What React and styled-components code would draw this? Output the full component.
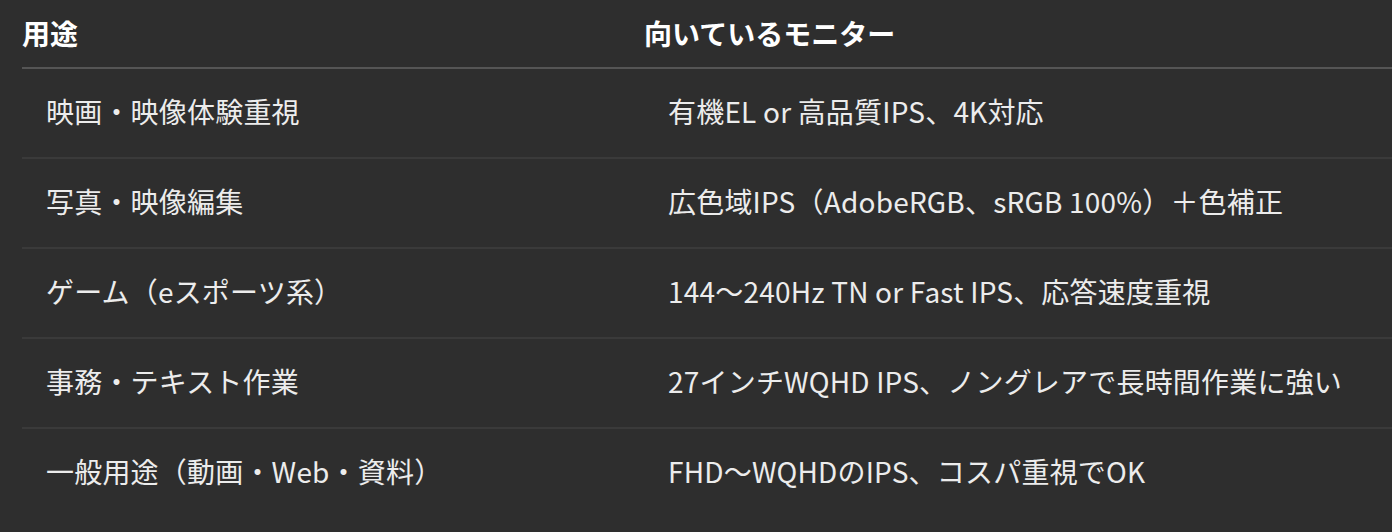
import React from "react";
import styled, { createGlobalStyle } from "styled-components";

const Global = createGlobalStyle`
  html, body {
    margin: 0;
    padding: 0;
    background: #2e2e2e;
  }
  body {
    font-family: "Noto Sans CJK JP", "Noto Sans", sans-serif;
    color: #eeeeee;
    overflow: hidden;
  }
`;

const Page = styled.div`
  width: 1392px;
  height: 532px;
  background: #2e2e2e;
  padding-left: 22px;
  box-sizing: border-box;
`;

const Table = styled.div`
  display: grid;
  grid-template-columns: 622px 1fr;
`;

const HeadCell = styled.div`
  font-size: 28px;
  line-height: 42px;
  font-weight: 700;
  color: #ffffff;
  padding: 12px 0 13px 0;
  border-bottom: 2px solid #555555;
  white-space: nowrap;
`;

const Cell = styled.div`
  font-size: 28px;
  line-height: 42px;
  font-weight: 400;
  color: #ececec;
  padding: 21px 24px 25px 24px;
  border-bottom: ${(p) => (p.$last ? "none" : "2px solid #3a3a3a")};
  white-space: nowrap;
  letter-spacing: 0.2px;
`;

const rows = [
  ["映画・映像体験重視", "有機EL or 高品質IPS、4K対応"],
  ["写真・映像編集", "広色域IPS（AdobeRGB、sRGB 100%）＋色補正"],
  ["ゲーム（eスポーツ系）", "144〜240Hz TN or Fast IPS、応答速度重視"],
  ["事務・テキスト作業", "27インチWQHD IPS、ノングレアで長時間作業に強い"],
  ["一般用途（動画・Web・資料）", "FHD〜WQHDのIPS、コスパ重視でOK"],
];

export default function App() {
  return (
    <>
      <Global />
      <Page>
        <Table>
          <HeadCell>用途</HeadCell>
          <HeadCell>向いているモニター</HeadCell>
          {rows.map(([a, b], i) => (
            <React.Fragment key={i}>
              <Cell $last={i === rows.length - 1}>{a}</Cell>
              <Cell $last={i === rows.length - 1}>{b}</Cell>
            </React.Fragment>
          ))}
        </Table>
      </Page>
    </>
  );
}
